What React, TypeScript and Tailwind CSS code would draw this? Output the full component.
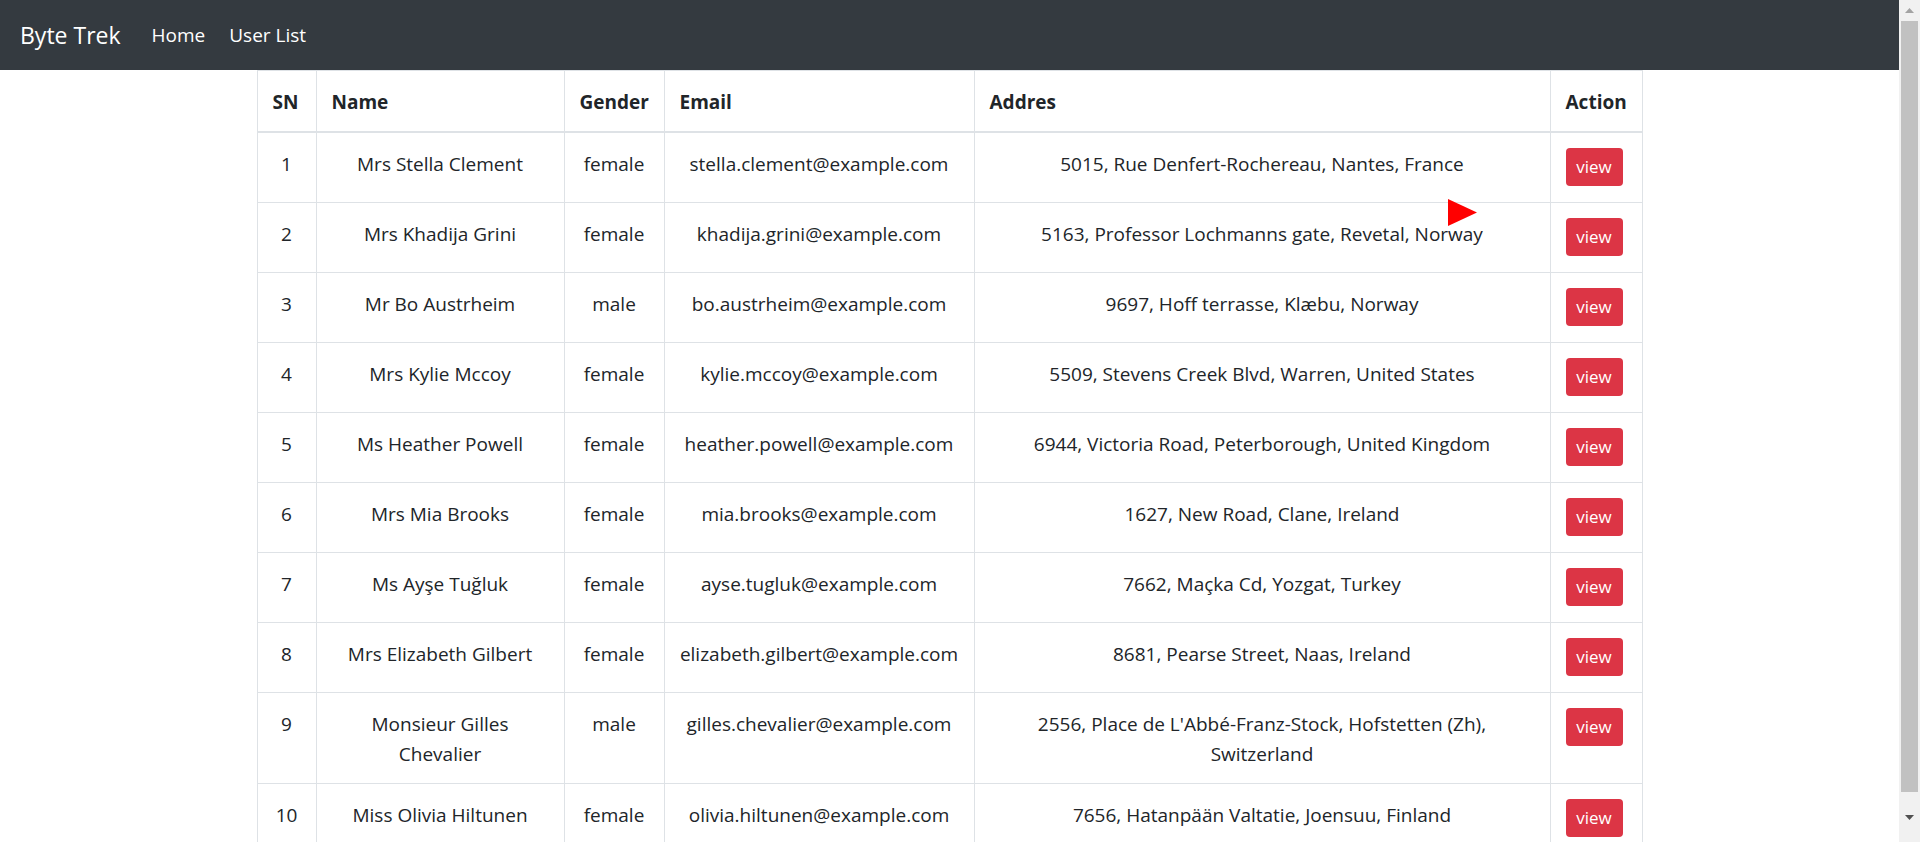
import React from "react";

type User = {
  name: string;
  gender: string;
  email: string;
  address: string;
};

const users: User[] = [
  { name: "Mrs Stella Clement", gender: "female", email: "stella.clement@example.com", address: "5015, Rue Denfert-Rochereau, Nantes, France" },
  { name: "Mrs Khadija Grini", gender: "female", email: "khadija.grini@example.com", address: "5163, Professor Lochmanns gate, Revetal, Norway" },
  { name: "Mr Bo Austrheim", gender: "male", email: "bo.austrheim@example.com", address: "9697, Hoff terrasse, Klæbu, Norway" },
  { name: "Mrs Kylie Mccoy", gender: "female", email: "kylie.mccoy@example.com", address: "5509, Stevens Creek Blvd, Warren, United States" },
  { name: "Ms Heather Powell", gender: "female", email: "heather.powell@example.com", address: "6944, Victoria Road, Peterborough, United Kingdom" },
  { name: "Mrs Mia Brooks", gender: "female", email: "mia.brooks@example.com", address: "1627, New Road, Clane, Ireland" },
  { name: "Ms Ayşe Tuğluk", gender: "female", email: "ayse.tugluk@example.com", address: "7662, Maçka Cd, Yozgat, Turkey" },
  { name: "Mrs Elizabeth Gilbert", gender: "female", email: "elizabeth.gilbert@example.com", address: "8681, Pearse Street, Naas, Ireland" },
  { name: "Monsieur Gilles Chevalier", gender: "male", email: "gilles.chevalier@example.com", address: "2556, Place de L'Abbé-Franz-Stock, Hofstetten (Zh), Switzerland" },
  { name: "Miss Olivia Hiltunen", gender: "female", email: "olivia.hiltunen@example.com", address: "7656, Hatanpään Valtatie, Joensuu, Finland" },
];

const th = "border border-[#dee2e6] border-b-2 px-[15px] pt-[16px] pb-[14px] text-left font-bold align-top";
const td = "border border-[#dee2e6] px-[15px] pt-[16px] pb-[14px] text-center align-top";

export default function App() {
  return (
    <div
      className="flex h-[842px] w-full overflow-hidden bg-white text-[#212529]"
      style={{ fontFamily: '"Open Sans", "Noto Sans", sans-serif' }}
    >
      <div className="relative flex-1 overflow-hidden">
        <nav className="flex h-[70px] items-center bg-[#343a40] px-[20px]">
          <span className="mr-[19px] text-[23px] leading-[38px] text-white">Byte Trek</span>
          <a className="px-[12px] text-[19px] leading-[30px] text-white">Home</a>
          <a className="px-[12px] text-[19px] leading-[30px] text-white">User List</a>
        </nav>

        <div className="flex justify-center">
          <table className="w-[1385px] table-fixed border-collapse text-[19px] leading-[30px]">
            <colgroup>
              <col className="w-[59px]" />
              <col className="w-[248px]" />
              <col className="w-[100px]" />
              <col className="w-[310px]" />
              <col className="w-[576px]" />
              <col className="w-[92px]" />
            </colgroup>
            <thead>
              <tr>
                <th className={th}>SN</th>
                <th className={th}>Name</th>
                <th className={th}>Gender</th>
                <th className={th}>Email</th>
                <th className={th}>Addres</th>
                <th className={th}>Action</th>
              </tr>
            </thead>
            <tbody>
              {users.map((u, i) => (
                <tr key={u.email}>
                  <td className={td}>{i + 1}</td>
                  <td className={td}>{u.name}</td>
                  <td className={td}>{u.gender}</td>
                  <td className={td}>{u.email}</td>
                  <td className={td}>{u.address}</td>
                  <td className="border border-[#dee2e6] px-[15px] pt-[15px] pb-[16px] text-left align-top">
                    <button className="h-[38px] w-[57px] rounded-[4px] bg-[#dc3545] text-[17px] leading-[26px] text-white">
                      view
                    </button>
                  </td>
                </tr>
              ))}
            </tbody>
          </table>
        </div>

        <svg
          className="absolute left-[1448px] top-[199px]"
          width="29"
          height="27"
          viewBox="0 0 29 27"
        >
          <polygon points="0,0 29,13.5 0,27" fill="#ff0000" />
        </svg>
      </div>

      <aside className="flex h-[842px] w-[21px] flex-col items-center bg-[#f1f1f1]">
        <div className="flex h-[21px] w-full items-center justify-center">
          <svg width="9" height="5" viewBox="0 0 9 5">
            <polygon points="4.5,0 9,5 0,5" fill="#a3a3a3" />
          </svg>
        </div>
        <div className="h-[771px] w-[17px] bg-[#c1c1c1]" />
        <div className="flex flex-1 w-full items-center justify-center">
          <svg width="9" height="5" viewBox="0 0 9 5">
            <polygon points="0,0 9,0 4.5,5" fill="#505050" />
          </svg>
        </div>
      </aside>
    </div>
  );
}
